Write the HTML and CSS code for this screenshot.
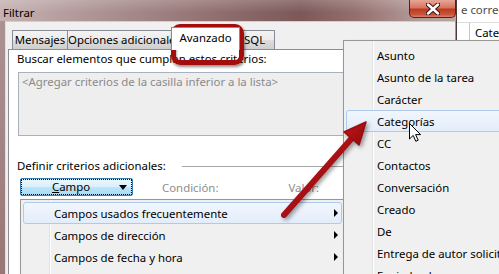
FILE: index.html
```html
<!DOCTYPE html>
<html>

    <head>
        <title>Filtrar</title>
        <meta charset="utf-8">
        <meta name="viewport" content="width=device-width, initial-scale=1.0">
        <link rel="stylesheet" href="styles.css">
    </head>

    <body>
        <div class="screen">
            <div class="window">
                <div class="titlebar">
                    <span class="title">Filtrar</span>
                    <div class="close">
                        <svg width="14" height="12" viewBox="0 0 14 12">
                            <path d="M2 1.5 L12 10.5 M12 1.5 L2 10.5" stroke="#3a1010" stroke-width="4.5" stroke-linecap="round"/>
                            <path d="M2 1.5 L12 10.5 M12 1.5 L2 10.5" stroke="#ffffff" stroke-width="2.5" stroke-linecap="round"/>
                        </svg>
                    </div>
                </div>
                <div class="frame">
                    <div class="client">
                        <div class="tabs">
                            <div class="tab tab-msg">Mensajes</div>
                            <div class="tab tab-opt">Opciones adicionales</div>
                            <div class="tab tab-adv selected">Avanzado</div>
                            <div class="tab tab-sql">SQL</div>
                        </div>
                        <div class="panel">
                            <p class="caption">Buscar elementos que cumplan estos criterios:</p>
                            <div class="criteria-list">&lt;Agregar criterios de la casilla inferior a la lista&gt;</div>
                            <div class="group-label">
                                <span>Definir criterios adicionales:</span>
                                <span class="rule"></span>
                            </div>
                            <div class="criteria-row">
                                <button class="field-btn"><span><u>C</u>ampo</span><span class="caret"></span></button>
                                <span class="muted cond">Condición:</span>
                                <span class="muted">Valor:</span>
                            </div>
                        </div>
                    </div>
                </div>
            </div>

            <div class="behind">
                <div class="behind-line">e correo</div>
                <div class="behind-head">
                    <span class="col-gap"></span>
                    <span class="col">Categorías</span>
                </div>
            </div>

            <!-- submenu of the Campo button -->
            <div class="menu field-groups">
                <div class="menu-item hover"><span>Campos usados frecuentemente</span><span class="sub"></span></div>
                <div class="menu-item"><span>Campos de dirección</span><span class="sub"></span></div>
                <div class="menu-item"><span>Campos de fecha y hora</span><span class="sub"></span></div>
            </div>

            <!-- fields of the selected group -->
            <div class="menu field-list">
                <div class="menu-item">Asunto</div>
                <div class="menu-item">Asunto de la tarea</div>
                <div class="menu-item">Carácter</div>
                <div class="menu-item hover">Categorías</div>
                <div class="menu-item">CC</div>
                <div class="menu-item">Contactos</div>
                <div class="menu-item">Conversación</div>
                <div class="menu-item">Creado</div>
                <div class="menu-item">De</div>
                <div class="menu-item">Entrega de autor solicitada</div>
                <div class="menu-item">Enviado el</div>
            </div>

            <div class="callout"></div>

            <svg class="arrow" width="499" height="274" viewBox="0 0 499 274">
                <defs>
                    <linearGradient id="shaft" x1="0" y1="0" x2="1" y2="1">
                        <stop offset="0" stop-color="#c4161a"/>
                        <stop offset="1" stop-color="#8e0a0c"/>
                    </linearGradient>
                </defs>
                <line x1="284" y1="215" x2="352" y2="138" stroke="url(#shaft)" stroke-width="6" stroke-linecap="round"/>
                <polygon points="366,122 344,132 359,145" fill="url(#shaft)" stroke="#9a0c0e" stroke-width="1.5" stroke-linejoin="round"/>
            </svg>

            <svg class="cursor" width="13" height="20" viewBox="0 0 13 20">
                <path d="M0.5 0.5 L0.5 16 L4.2 12.4 L6.8 18.3 L9.2 17.2 L6.6 11.6 L11.6 11.6 Z" fill="#ffffff" stroke="#000000" stroke-width="1" stroke-linejoin="round"/>
            </svg>
        </div>
    </body>

</html>
```

FILE: styles.css
```css
body {
    margin: 0;
    font-family: "Noto Sans", Arial, sans-serif;
    font-size: 11.4px;
    color: #000;
    background: #ffffff;
}

.screen {
    position: relative;
    display: flex;
    width: 499px;
    height: 274px;
    overflow: hidden;
}

/* dialog window */

.window {
    display: flex;
    flex-direction: column;
    width: 457px;
    flex: none;
    background: linear-gradient(to bottom, #ad9494, #9a7676);
    border-right: 1px solid #4c3a3a;
    box-sizing: border-box;
}

.titlebar {
    display: flex;
    align-items: flex-start;
    height: 24px;
    background:
        linear-gradient(to bottom, rgba(255, 255, 255, 0.18), rgba(255, 255, 255, 0) 60%),
        linear-gradient(to right, #c6b2b2 0%, #ac9292 22%, #906e6e 48%, #7c5858 66%, #946f6e 78%, #b39b99 92%, #bba5a3 100%);
}

.title {
    padding: 5px 0 0 3px;
    line-height: 16px;
}

.close {
    display: flex;
    align-items: center;
    justify-content: center;
    width: 47px;
    height: 18px;
    margin-left: auto;
    box-sizing: border-box;
    border: 1px solid #5e1c14;
    border-top: none;
    border-radius: 0 0 5px 5px;
    background: linear-gradient(to bottom, #e7a696 0%, #d6755f 45%, #bd3a22 55%, #c9543a 85%, #d9826a 100%);
}

.frame {
    flex: 1;
    padding: 0 1px 0 5px;
}

.client {
    height: 100%;
    background: #f0f0f0;
    border-top: 1px solid #d8cccc;
    border-left: 1px solid #e6dcdc;
}

/* tabs */

.tabs {
    display: flex;
    align-items: flex-end;
    height: 22px;
    padding: 5px 0 0 6px;
}

.tab {
    height: 19px;
    box-sizing: border-box;
    border: 1px solid #898c95;
    border-bottom: none;
    margin-right: -1px;
    line-height: 17px;
    text-align: center;
    white-space: nowrap;
    background: linear-gradient(to bottom, #f3f3f3 0%, #ebebeb 50%, #dddddd 50%, #cfcfcf 100%);
}

.tab-msg { width: 56px; }
.tab-opt { width: 107px; }
.tab-adv { width: 69px; }
.tab-sql { width: 37px; text-align: left; padding-left: 5px; }

.tab.selected {
    position: relative;
    z-index: 1;
    height: 23px;
    margin: 0 -2px -1px -2px;
    line-height: 19px;
    background: #ffffff;
}

.panel {
    height: 240px;
    margin-left: 2px;
    padding: 1px 8px 0 8px;
    border: 1px solid #898c95;
    background: #ffffff;
}

.caption {
    margin: 0;
    line-height: 16px;
}

.criteria-list {
    height: 64px;
    box-sizing: border-box;
    margin: 5px 0 0 1px;
    padding: 1px 3px;
    line-height: 16px;
    color: #8a8a8a;
    background: #eeeeee;
    border: 1px solid #a9b1bd;
}

.group-label {
    display: flex;
    align-items: center;
    margin-top: 22px;
    line-height: 16px;
}

.rule {
    flex: 1;
    height: 1px;
    margin-left: 16px;
    background: #a6a6a6;
}

.criteria-row {
    display: flex;
    align-items: center;
    margin: 4px 0 0 3px;
}

.field-btn {
    display: flex;
    align-items: center;
    width: 113px;
    height: 18px;
    padding: 0 5px 0 31px;
    font: inherit;
    line-height: 14px;
    border: 1px solid #3c7fb1;
    border-radius: 2px;
    outline: 1px dotted #000;
    outline-offset: -2px;
    background: linear-gradient(to bottom, #eaf6fd 0%, #d9f0fc 50%, #bee6fd 50%, #a7d9f5 100%);
}

.caret {
    margin-left: auto;
    width: 0;
    height: 0;
    border-top: 5px solid #000;
    border-left: 4.5px solid transparent;
    border-right: 4.5px solid transparent;
}

.muted {
    color: #8d8d8d;
}

.cond {
    margin: 0 70px 0 29px;
}

/* window behind the dialog */

.behind {
    flex: 1;
    background: #ffffff;
    color: #4a4a4a;
}

.behind-line {
    height: 22px;
    padding-left: 4px;
    line-height: 20px;
    white-space: nowrap;
}

.behind-head {
    display: flex;
    height: 18px;
    border-top: 1px solid #dcdcdc;
    color: #000;
    white-space: nowrap;
}

.col-gap {
    width: 12px;
    flex: none;
    border-right: 1px solid #c5c5c5;
}

.col {
    padding-left: 5px;
    line-height: 19px;
}

/* context menus */

.menu {
    position: absolute;
    box-sizing: border-box;
    padding: 2px;
    border: 1px solid #979797;
    background:
        linear-gradient(to right, transparent 28px, #e2e3e3 28px, #e2e3e3 29px, #ffffff 29px, #ffffff 30px, transparent 30px),
        #f0f0f0;
    box-shadow: 2px 2px 3px rgba(0, 0, 0, 0.3);
}

.field-groups {
    left: 20px;
    top: 199px;
    width: 325px;
    height: 110px;
}

.field-list {
    left: 343px;
    top: 40px;
    width: 170px;
    height: 260px;
    padding-top: 3px;
}

.menu-item {
    display: flex;
    align-items: center;
    height: 22px;
    box-sizing: border-box;
    padding: 0 3px 0 30px;
    border: 1px solid transparent;
    border-radius: 3px;
    white-space: nowrap;
}

.menu-item.hover {
    border-color: #aecbee;
    background: linear-gradient(to bottom, #f1f6fd, #e3edfa);
}

.sub {
    margin-left: auto;
    width: 0;
    height: 0;
    border-left: 4px solid #000;
    border-top: 4px solid transparent;
    border-bottom: 4px solid transparent;
}

/* annotations drawn over the screenshot */

.callout {
    position: absolute;
    left: 171px;
    top: 24px;
    width: 73px;
    height: 41px;
    box-sizing: border-box;
    border: 5px solid #a50c0c;
    border-radius: 9px;
    box-shadow: 1px 2px 3px rgba(0, 0, 0, 0.45), inset 1px 1px 2px rgba(0, 0, 0, 0.3);
}

.arrow {
    position: absolute;
    left: 0;
    top: 0;
    pointer-events: none;
    filter: drop-shadow(2px 2px 2px rgba(0, 0, 0, 0.4));
}

.cursor {
    position: absolute;
    left: 409px;
    top: 123px;
}
```
